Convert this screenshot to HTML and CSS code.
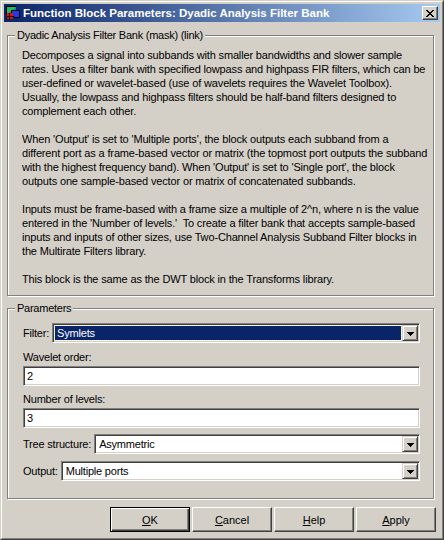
FILE: index.html
```html
<!DOCTYPE html>
<html>
<head>
<meta charset="utf-8">
<link rel="stylesheet" href="styles.css">
</head>
<body>
<div class="window">
  <div class="frame">
    <div class="titlebar">
      <svg class="appicon" viewBox="0 0 16 16" shape-rendering="crispEdges">
        <rect x="1" y="1" width="10" height="1" fill="#000"/>
        <rect x="1" y="1" width="1" height="13" fill="#000"/>
        <path d="M2 2h9v7H2z" fill="#1a9a6a"/>
        <path d="M2 2h8L2 10z" fill="#20c060"/>
        <rect x="6" y="5" width="9" height="8" fill="#000"/>
        <rect x="7" y="6" width="7" height="6" fill="#1c3cf0"/>
        <circle cx="5" cy="11" r="3.6" fill="#e01010" shape-rendering="auto"/>
        <rect x="4" y="8" width="1" height="7" fill="#000"/>
        <rect x="2" y="11" width="7" height="1" fill="#000"/>
      </svg>
      <span class="title">Function Block Parameters: Dyadic Analysis Filter Bank</span>
      <div class="closebtn">
        <svg width="8" height="7" viewBox="0 0 8 7" shape-rendering="crispEdges"><path d="M0 0h2v1H0z M6 0h2v1H6z M1 1h2v1H1z M5 1h2v1H5z M2 2h4v1H2z M3 3h2v1H3z M2 4h4v1H2z M1 5h2v1H1z M5 5h2v1H5z M0 6h2v1H0z M6 6h2v1H6z" fill="#000"/></svg>
      </div>
    </div>
    <div class="client">
      <div class="group desc">
        <span class="legend">Dyadic Analysis Filter Bank (mask) (link)</span>
        <p>Decomposes a signal into subbands with smaller bandwidths and slower sample<br>rates. Uses a filter bank with specified lowpass and highpass FIR filters, which can be<br>user-defined or wavelet-based (use of wavelets requires the Wavelet Toolbox).<br>Usually, the lowpass and highpass filters should be half-band filters designed to<br>complement each other.</p>
        <p>When 'Output' is set to 'Multiple ports', the block outputs each subband from a<br>different port as a frame-based vector or matrix (the topmost port outputs the subband<br>with the highest frequency band). When 'Output' is set to 'Single port', the block<br>outputs one sample-based vector or matrix of concatenated subbands.</p>
        <p>Inputs must be frame-based with a frame size a multiple of 2^n, where n is the value<br>entered in the 'Number of levels.'&nbsp; To create a filter bank that accepts sample-based<br>inputs and inputs of other sizes, use Two-Channel Analysis Subband Filter blocks in<br>the Multirate Filters library.</p>
        <p>This block is the same as the DWT block in the Transforms library.</p>
      </div>
      <div class="group params">
        <span class="legend">Parameters</span>
        <div class="row">
          <span class="lbl">Filter:</span>
          <div class="combo">
            <div class="val sel">Symlets</div>
            <div class="ddbtn"><svg width="7" height="4" viewBox="0 0 7 4" shape-rendering="crispEdges"><path d="M0 0h7v1H0z M1 1h5v1H1z M2 2h3v1H2z M3 3h1v1H3z" fill="#000"/></svg></div>
          </div>
        </div>
        <div class="lbl stack first">Wavelet order:</div>
        <div class="edit">2</div>
        <div class="lbl stack">Number of levels:</div>
        <div class="edit">3</div>
        <div class="row r-tree">
          <span class="lbl">Tree structure:</span>
          <div class="combo">
            <div class="val">Asymmetric</div>
            <div class="ddbtn"><svg width="7" height="4" viewBox="0 0 7 4" shape-rendering="crispEdges"><path d="M0 0h7v1H0z M1 1h5v1H1z M2 2h3v1H2z M3 3h1v1H3z" fill="#000"/></svg></div>
          </div>
        </div>
        <div class="row r-out">
          <span class="lbl">Output:</span>
          <div class="combo">
            <div class="val">Multiple ports</div>
            <div class="ddbtn"><svg width="7" height="4" viewBox="0 0 7 4" shape-rendering="crispEdges"><path d="M0 0h7v1H0z M1 1h5v1H1z M2 2h3v1H2z M3 3h1v1H3z" fill="#000"/></svg></div>
          </div>
        </div>
      </div>
      <div class="buttons">
        <div class="btn default"><span><u>O</u>K</span></div>
        <div class="btn"><span><u>C</u>ancel</span></div>
        <div class="btn"><span><u>H</u>elp</span></div>
        <div class="btn"><span><u>A</u>pply</span></div>
      </div>
    </div>
  </div>
</div>
</body>
</html>
```

FILE: styles.css
```css
* { box-sizing: border-box; }
html, body { margin: 0; padding: 0; }
body {
  width: 444px;
  height: 540px;
  overflow: hidden;
  background: #D4D0C8;
  font-family: "Liberation Sans", Arial, sans-serif;
  font-size: 11px;
  color: #000;
}
.window {
  width: 444px;
  height: 540px;
  border: 1px solid;
  border-color: #D4D0C8 #404040 #404040 #D4D0C8;
  background: #D4D0C8;
}
.frame {
  height: 100%;
  border: 1px solid;
  border-color: #FFFFFF #808080 #808080 #FFFFFF;
  padding: 2px;
  display: flex;
  flex-direction: column;
}
.titlebar {
  height: 18px;
  flex: none;
  background: linear-gradient(to right, #0A246A, #A6CAF0);
  display: flex;
  align-items: center;
  padding: 0 2px 0 1px;
}
.appicon { width: 16px; height: 16px; flex: none; }
.title {
  flex: 1;
  margin-left: 2px;
  color: #fff;
  font-weight: bold;
  font-size: 11.5px;
  white-space: nowrap;
}
.closebtn {
  width: 16px;
  height: 14px;
  flex: none;
  background: #D4D0C8;
  border: 1px solid;
  border-color: #FFFFFF #404040 #404040 #FFFFFF;
  box-shadow: inset -1px -1px 0 #808080;
  display: flex;
  align-items: center;
  justify-content: center;
}
.client {
  flex: 1;
  display: flex;
  flex-direction: column;
  padding: 13px 4px 4px 3px;
}
.group {
  position: relative;
  margin-right: 2px;
  border: 1px solid #808080;
  box-shadow: inset 1px 1px 0 #fff, 1px 1px 0 #fff;
}
.legend {
  position: absolute;
  top: -8px;
  left: 7px;
  padding: 0 2px;
  line-height: 14px;
  background: #D4D0C8;
  letter-spacing: -0.25px;
  white-space: nowrap;
}
.desc {
  padding: 12px 8px 9px 14px;
  letter-spacing: -0.15px;
  white-space: nowrap;
}
.desc p { margin: 0 0 14px; line-height: 14px; }
.desc p:last-child { margin-bottom: 0; }
.params {
  margin-top: 12px;
  padding: 14px 13px 17px 15px;
}
.lbl { line-height: 14px; white-space: nowrap; letter-spacing: -0.2px; }
.row { display: flex; align-items: center; gap: 3px; height: 20px; }
.stack { margin-top: 6px; }
.stack.first { margin-top: 7px; }
.edit {
  margin-top: 2px;
  height: 20px;
  background: #fff;
  border: 1px solid;
  border-color: #808080 #FFFFFF #FFFFFF #808080;
  box-shadow: inset 1px 1px 0 #404040, inset -1px -1px 0 #D4D0C8;
  padding-left: 3px;
  line-height: 18px;
}
.r-tree { margin-top: 6px; }
.r-out { margin-top: 7px; }
.combo {
  flex: 1;
  height: 20px;
  display: flex;
  background: #fff;
  border: 1px solid;
  border-color: #808080 #FFFFFF #FFFFFF #808080;
  box-shadow: inset 1px 1px 0 #404040, inset -1px -1px 0 #D4D0C8;
  padding: 1px;
}
.val {
  flex: 1;
  line-height: 16px;
  padding-left: 3px;
  white-space: nowrap;
  letter-spacing: -0.2px;
}
.val.sel {
  margin: 1px;
  line-height: 14px;
  padding-left: 2px;
  background: #0A246A;
  color: #fff;
  outline: 1px dotted #F2EAB8;
  outline-offset: 0px;
}
.ddbtn {
  width: 16px;
  height: 16px;
  flex: none;
  background: #D4D0C8;
  border: 1px solid;
  border-color: #D4D0C8 #404040 #404040 #D4D0C8;
  box-shadow: inset 1px 1px 0 #fff, inset -1px -1px 0 #808080;
  display: flex;
  align-items: center;
  justify-content: center;
  padding-top: 1px;
}
.buttons {
  margin-top: 8px;
  display: flex;
  justify-content: flex-end;
  gap: 2px;
}
.btn {
  width: 80px;
  height: 25px;
  background: #D4D0C8;
  border: 1px solid;
  border-color: #FFFFFF #404040 #404040 #FFFFFF;
  box-shadow: inset -1px -1px 0 #808080;
  display: flex;
  align-items: center;
  justify-content: center;
}
.btn.default {
  border-color: #000;
  box-shadow: inset 1px 1px 0 #fff, inset -1px -1px 0 #404040, inset -2px -2px 0 #808080;
}
.btn u { text-decoration: underline; text-underline-offset: 1px; }
```
